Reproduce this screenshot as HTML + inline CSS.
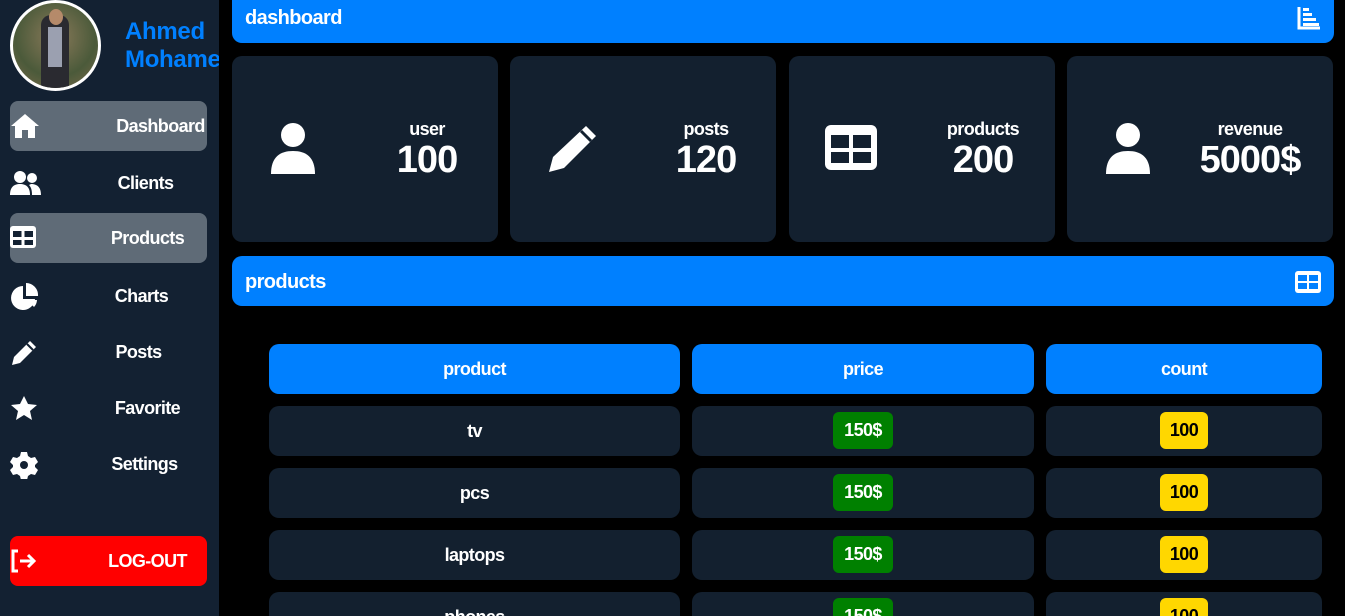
<!DOCTYPE html>
<html style="overflow:hidden;height:616px"><head><meta charset="utf-8"><style>
*{margin:0;padding:0;box-sizing:border-box}
body{width:1345px;height:616px;background:#000;overflow:hidden;position:relative;font-family:"Liberation Sans",Arial,sans-serif;font-weight:bold;color:#fff;letter-spacing:-0.6px}
.a{position:absolute}
.side{left:0;top:0;width:219px;height:616px;background:#132132}
.av{left:10px;top:0;width:91px;height:91px;border-radius:50%;border:3px solid #fff;background:radial-gradient(circle at 50% 40%,#8a7a5a,#4b5a3a 60%,#7b6a4a);overflow:hidden}
.name{left:125px;top:18px;color:#0080ff;font-size:24px;line-height:28px;white-space:nowrap;width:94px;overflow:hidden;letter-spacing:-0.3px}
.nav{left:10px;width:197px;height:50px;border-radius:8px;font-size:18px;line-height:50px}
.nav span{position:absolute;left:0;width:145px;text-align:center}
.nav svg{position:absolute;left:0;top:12px}
.hl{background:#5f6b77}
.hdr{left:232px;width:1102px;background:#0080ff;border-radius:10px;font-size:20px;padding-left:13px}
.card{top:56px;width:266px;height:186px;background:#13202f;border-radius:10px}
.card svg{position:absolute;left:36px;top:66px}
.card .l{position:absolute;left:150px;width:90px;text-align:center;top:63px;font-size:18px}
.card .n{position:absolute;left:115px;width:160px;text-align:center;top:83px;font-size:38px;letter-spacing:-1px}
.c{height:50px;border-radius:10px;background:#13202f;font-size:18px;line-height:50px;text-align:center}
.th{background:#0080ff}
.bd{display:inline-block;line-height:37px;height:37px;border-radius:6px;vertical-align:middle;margin-top:-3px}
.g{background:#008000;color:#fff;padding:0 11px}
.y{background:#ffd700;color:#000;padding:0 10px}
</style></head><body>
<div class="a side"></div>
<div class="a av">
<div class="a" style="left:28px;top:12px;width:28px;height:80px;background:#2a2a30;border-radius:10px 10px 0 0"></div>
<div class="a" style="left:36px;top:6px;width:14px;height:16px;background:#b58a6a;border-radius:50%"></div>
<div class="a" style="left:35px;top:24px;width:14px;height:40px;background:#9ba0b0"></div>
</div>
<div class="a name">Ahmed<br>Mohamed</div>

<div class="a nav hl" style="top:101px"><svg width="30" height="26" viewBox="0 0 30 26"><path d="M15 1L1 13h4v12h7v-8h6v8h7V13h4z" fill="#fff"/></svg><span style="left:78px">Dashboard</span></div>
<div class="a nav" style="top:158px"><svg width="32" height="26" viewBox="0 0 32 26"><circle cx="10" cy="7" r="6" fill="#fff"/><circle cx="22" cy="8" r="5" fill="#fff"/><path d="M0 25c0-8 4-11 10-11s10 3 10 11z" fill="#fff"/><path d="M21 14c6 0 10 3 10 11h-9c0-5-1-8-3-10z" fill="#fff"/></svg><span style="left:63px">Clients</span></div>
<div class="a nav hl" style="top:213px"><svg width="28" height="26" viewBox="0 0 28 26"><rect x="0" y="1" width="26" height="22" rx="3" fill="#fff"/><rect x="3" y="6" width="8.5" height="6" fill="#132132"/><rect x="14.5" y="6" width="8.5" height="6" fill="#132132"/><rect x="3" y="15" width="8.5" height="5" fill="#132132"/><rect x="14.5" y="15" width="8.5" height="5" fill="#132132"/></svg><span style="left:65px">Products</span></div>
<div class="a nav" style="top:271px"><svg width="30" height="28" viewBox="0 0 30 28"><path d="M13 3A12 12 0 1 0 25 16H13z" fill="#fff"/><path d="M16 0v13h12A12 12 0 0 0 16 0z" fill="#fff"/><path d="M17 17l7 7a11 11 0 0 0 3-7z" fill="#fff"/></svg><span style="left:59px">Charts</span></div>
<div class="a nav" style="top:327px"><svg width="28" height="28" viewBox="0 0 28 28"><path d="M20 2l6 6-16 16-8 2 2-8z" fill="#fff"/><path d="M17 5l6 6" stroke="#132132" stroke-width="2"/></svg><span style="left:56px">Posts</span></div>
<div class="a nav" style="top:383px"><svg width="28" height="28" viewBox="0 0 28 28"><path d="M14 1l4 8 9 1-7 6 2 9-8-5-8 5 2-9-7-6 9-1z" fill="#fff"/></svg><span style="left:65px">Favorite</span></div>
<div class="a nav" style="top:439px"><svg width="28" height="28" viewBox="0 0 28 28"><path d="M11 1h6l1 4 3 2 4-1 3 5-3 3v2l3 3-3 5-4-1-3 2-1 4h-6l-1-4-3-2-4 1-3-5 3-3v-2L0 11l3-5 4 1 3-2z" fill="#fff"/><circle cx="14" cy="14" r="4" fill="#132132"/></svg><span style="left:62px">Settings</span></div>
<div class="a nav" style="top:536px;background:#f00"><svg width="28" height="26" viewBox="0 0 28 26"><path d="M8 3H3v20h5" stroke="#fff" stroke-width="3" fill="none"/><path d="M10 13h14M18 7l6 6-6 6" stroke="#fff" stroke-width="3" fill="none"/></svg><span style="left:65px">LOG-OUT</span></div>

<div class="a hdr" style="top:-10px;height:53px;padding-top:17px">dashboard
<svg class="a" style="right:13px;top:16px" width="24" height="24" viewBox="0 0 24 24"><path d="M2 1v21h21" stroke="#fff" stroke-width="3" fill="none"/><rect x="6" y="7" width="9" height="3" fill="#fff"/><rect x="6" y="12" width="13" height="3" fill="#fff"/><rect x="6" y="17" width="16" height="3" fill="#fff"/><rect x="6" y="2" width="6" height="3" fill="#fff"/></svg></div>

<div class="a card" style="left:232px"><svg width="50" height="54" viewBox="0 0 50 54"><circle cx="25" cy="13" r="12" fill="#fff"/><path d="M3 52c0-17 9-23 22-23s22 6 22 23z" fill="#fff"/></svg><div class="l">user</div><div class="n">100</div></div>
<div class="a card" style="left:510px"><svg width="54" height="54" viewBox="0 0 54 54"><path d="M40 4l10 10-32 32-15 4 4-15z" fill="#fff"/><path d="M35 9l10 10" stroke="#13202f" stroke-width="3"/></svg><div class="l" style="left:151px">posts</div><div class="n" style="left:116px">120</div></div>
<div class="a card" style="left:789px"><svg width="54" height="50" viewBox="0 0 54 50"><rect x="0" y="3" width="52" height="45" rx="6" fill="#fff"/><rect x="6" y="13" width="18" height="13" fill="#13202f"/><rect x="28" y="13" width="18" height="13" fill="#13202f"/><rect x="6" y="30" width="18" height="11" fill="#13202f"/><rect x="28" y="30" width="18" height="11" fill="#13202f"/></svg><div class="l" style="left:149px">products</div><div class="n" style="left:114px">200</div></div>
<div class="a card" style="left:1067px"><svg width="50" height="54" viewBox="0 0 50 54"><circle cx="25" cy="13" r="12" fill="#fff"/><path d="M3 52c0-17 9-23 22-23s22 6 22 23z" fill="#fff"/></svg><div class="l" style="left:138px">revenue</div><div class="n" style="left:103px">5000$</div></div>

<div class="a hdr" style="top:256px;height:50px;line-height:52px">products
<svg class="a" style="right:13px;top:14px" width="26" height="24" viewBox="0 0 26 24"><rect x="0" y="1" width="26" height="22" rx="3" fill="#fff"/><rect x="3" y="5" width="9" height="6" fill="#0080ff"/><rect x="14" y="5" width="9" height="6" fill="#0080ff"/><rect x="3" y="13" width="9" height="6" fill="#0080ff"/><rect x="14" y="13" width="9" height="6" fill="#0080ff"/></svg></div>

<div class="a c th" style="left:269px;top:344px;width:411px">product</div>
<div class="a c th" style="left:692px;top:344px;width:342px">price</div>
<div class="a c th" style="left:1046px;top:344px;width:276px">count</div>

<div class="a c" style="left:269px;top:406px;width:411px">tv</div>
<div class="a c" style="left:692px;top:406px;width:342px"><span class="bd g">150$</span></div>
<div class="a c" style="left:1046px;top:406px;width:276px"><span class="bd y">100</span></div>
<div class="a c" style="left:269px;top:468px;width:411px">pcs</div>
<div class="a c" style="left:692px;top:468px;width:342px"><span class="bd g">150$</span></div>
<div class="a c" style="left:1046px;top:468px;width:276px"><span class="bd y">100</span></div>
<div class="a c" style="left:269px;top:530px;width:411px">laptops</div>
<div class="a c" style="left:692px;top:530px;width:342px"><span class="bd g">150$</span></div>
<div class="a c" style="left:1046px;top:530px;width:276px"><span class="bd y">100</span></div>
<div class="a c" style="left:269px;top:592px;width:411px">phones</div>
<div class="a c" style="left:692px;top:592px;width:342px"><span class="bd g">150$</span></div>
<div class="a c" style="left:1046px;top:592px;width:276px"><span class="bd y">100</span></div>
</body></html>
